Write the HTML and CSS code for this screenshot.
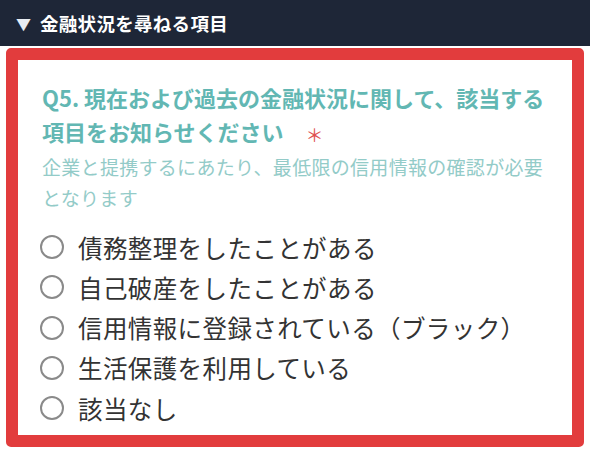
FILE: index.html
```html
<!DOCTYPE html>
<html lang="ja">
<head>
<meta charset="utf-8">
<link rel="stylesheet" href="styles.css">
</head>
<body>
<div class="header"><span class="tri">▼</span><span class="htitle">金融状況を尋ねる項目</span></div>
<div class="card">
  <div class="q">Q5. 現在および過去の金融状況に関して、該当する項目をお知らせください<span class="req">＊</span></div>
  <div class="sub">企業と提携するにあたり、最低限の信用情報の確認が必要となります</div>
  <ul class="opts">
    <li><span class="radio"></span>債務整理をしたことがある</li>
    <li><span class="radio"></span>自己破産をしたことがある</li>
    <li><span class="radio"></span>信用情報に登録されている（ブラック）</li>
    <li><span class="radio"></span>生活保護を利用している</li>
    <li><span class="radio"></span>該当なし</li>
  </ul>
</div>
</body>
</html>
```
FILE: styles.css
```css
html, body {
  margin: 0;
  padding: 0;
  background: #ffffff;
  font-family: "Noto Sans CJK JP", "Noto Sans", sans-serif;
}
.header {
  height: 46px;
  background: #1e2637;
  color: #ffffff;
  display: flex;
  align-items: center;
  padding-left: 16px;
  box-sizing: border-box;
}
.tri {
  font-size: 15px;
  color: #e8ecf2;
  margin-right: 9px;
}
.htitle {
  font-size: 18.5px;
  font-weight: 700;
  letter-spacing: 0.3px;
}
.card {
  margin: 2px 6px 0 6px;
  border: 12px solid #e23c3d;
  border-radius: 5px;
  padding: 20px 14px 6px 24px;
  height: 399px;
  box-sizing: border-box;
}
.q {
  color: #62b7b3;
  font-weight: 700;
  font-size: 22px;
  line-height: 34px;
}
.req {
  color: #e0514f;
  font-weight: 400;
  font-size: 18px;
  margin-left: 22px;
  vertical-align: -1px;
}
.sub {
  color: #93cbc8;
  font-size: 19px;
  line-height: 31px;
  letter-spacing: 0.3px;
}
.opts {
  list-style: none;
  margin: 14px 0 0 -2px;
  padding: 0;
}
.opts li {
  display: flex;
  align-items: center;
  height: 40.25px;
  font-size: 24.5px;
  letter-spacing: 0.4px;
  color: #333333;
}
.radio {
  width: 20px;
  height: 20px;
  border: 2px solid #8a8a8a;
  border-radius: 50%;
  margin-right: 14px;
  flex: none;
}
```
